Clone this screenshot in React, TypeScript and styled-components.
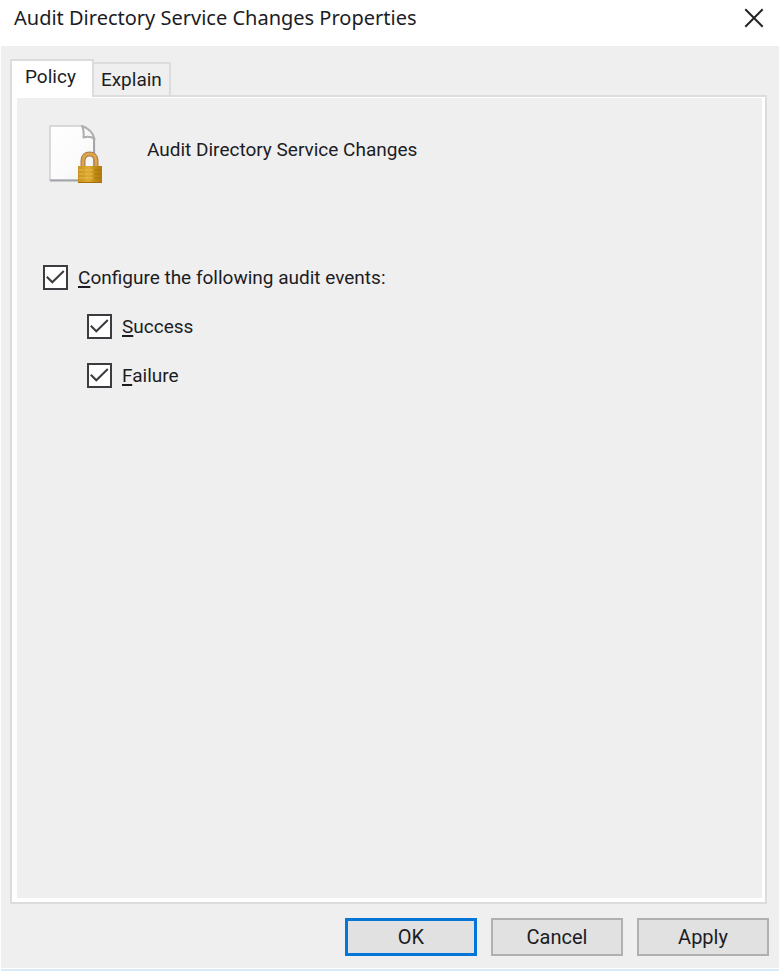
import React, { useId, useState } from "react";
import styled, { createGlobalStyle } from "styled-components";

const GlobalStyle = createGlobalStyle`
  *, *::before, *::after { box-sizing: border-box; }
  body {
    margin: 0;
    background: #ffffff;
    color: #1c1c24;
    font-family: Roboto, "Liberation Sans", Arial, sans-serif;
    font-size: 19px;
    line-height: 24px;
  }
  button, input { font: inherit; color: inherit; }
`;

const Dialog = styled.main`
  display: flex;
  flex-direction: column;
  min-height: 100vh;
  padding: 0 2px 1px 1px;
`;

const TitleBar = styled.header`
  display: flex;
  align-items: center;
  justify-content: space-between;
  height: 46px;
  padding: 0 12px 10px 13px;
`;

const Title = styled.h1`
  margin: 0;
  font-family: "Noto Sans", "Open Sans", sans-serif;
  font-size: 20px;
  font-weight: 400;
  line-height: 28px;
`;

const CloseButton = styled.button`
  display: flex;
  padding: 3px;
  border: 0;
  background: transparent;
`;

const Body = styled.div`
  display: flex;
  flex: 1;
  flex-direction: column;
  padding: 13px 10px 12px 9px;
  background: #efefef;
  border-bottom: 1px solid #ffffff;
  box-shadow: 0 2px 0 #d8eaf7;
  margin-bottom: 2px;
`;

const TabList = styled.div`
  display: flex;
  align-items: flex-end;
`;

const Tab = styled.button<{ $active: boolean }>`
  position: relative;
  z-index: ${(p) => (p.$active ? 1 : 0)};
  height: ${(p) => (p.$active ? 38 : 33)}px;
  margin-bottom: ${(p) => (p.$active ? -2 : 0)}px;
  padding: ${(p) => (p.$active ? "0 16px 4px 13px" : "0 7px")};
  border: 2px solid #dcdcdc;
  border-bottom: 0;
  background: ${(p) => (p.$active ? "#ffffff" : "#efefef")};
  & + & { border-left: 0; }
`;

const Panel = styled.section`
  display: flex;
  flex: 1;
  flex-direction: column;
  margin-right: 2px;
  border: 2px solid #dcdcdc;
  background: #ffffff;
  padding: 1px 3px 4px 5px;
`;

const Page = styled.div`
  flex: 1;
  padding: 26px;
  background: #efefef;
`;

const PolicyHeading = styled.div`
  display: flex;
  align-items: flex-start;
  gap: 45px;
  margin: 0 0 81px 5px;
`;

const PolicyName = styled.h2`
  margin: 0;
  padding-top: 14px;
  font-size: 19px;
  font-weight: 400;
  line-height: 24px;
`;

const Options = styled.div`
  display: flex;
  flex-direction: column;
  gap: 24px;
`;

const Option = styled.label<{ $nested?: boolean }>`
  display: flex;
  align-items: center;
  gap: 10px;
  margin-left: ${(p) => (p.$nested ? 44 : 0)}px;
`;

const BoxFrame = styled.span`
  display: grid;
  width: 25px;
  height: 25px;
  & > * { grid-area: 1 / 1; }
`;

const Box = styled.input`
  appearance: none;
  width: 25px;
  height: 25px;
  margin: 0;
  border: 2px solid #3c3c40;
  background: #ffffff;
  & + svg { visibility: hidden; pointer-events: none; }
  &:checked + svg { visibility: visible; }
`;

const AccessKey = styled.span`
  text-decoration: underline;
  text-decoration-thickness: 2px;
  text-underline-offset: 2px;
  text-decoration-skip-ink: none;
`;

const Actions = styled.footer`
  display: flex;
  justify-content: flex-end;
  gap: 14px;
  padding-top: 14px;
`;

const ActionButton = styled.button<{ $primary?: boolean }>`
  width: 132px;
  height: 38px;
  padding: 0;
  border: ${(p) => (p.$primary ? "3px solid #0675d8" : "2px solid #b0b0b0")};
  background: #e1e1e1;
  font-size: 20px;
`;

function CloseIcon() {
  return (
    <svg width="20" height="20" viewBox="0 0 20 20" aria-hidden="true">
      <path d="M1.3 1.3 18.7 18.7M18.7 1.3 1.3 18.7" fill="none" stroke="#242428" strokeWidth="2" />
    </svg>
  );
}

function CheckMark() {
  return (
    <svg width="25" height="25" viewBox="0 0 25 25" aria-hidden="true">
      <path d="M3.8 11.8 9.300 17.300 20.800 6" fill="none" stroke="#3c3c40" strokeWidth="2" />
    </svg>
  );
}

function LockedDocumentIcon() {
  const id = useId();
  return (
    <svg width="54" height="60" viewBox="0 0 54 60" aria-hidden="true">
      <defs>
        <linearGradient id={`${id}-paper`} x1="0" y1="0" x2="1" y2="1">
          <stop offset="0" stopColor="#ffffff" />
          <stop offset="0.6" stopColor="#fbfbfb" />
          <stop offset="1" stopColor="#eceef0" />
        </linearGradient>
        <linearGradient id={`${id}-brass`}>
          <stop offset="0" stopColor="#c8921c" />
          <stop offset="0.45" stopColor="#dfac35" />
          <stop offset="0.7" stopColor="#c18c14" />
          <stop offset="1" stopColor="#b27b0c" />
        </linearGradient>
      </defs>
      <path d="M2 2H34C40 4 45 9 46.500 15V56H2Z" fill={`url(#${id}-paper)`} stroke="#cfd0d2" strokeWidth="1.5" />
      <path d="M2 56.500H46V15" fill="none" stroke="#a2a5aa" strokeWidth="2" />
      <path d="M34 2C40 4 45 9 46.500 15C43 12.500 39 12.500 35.500 13.500C36 9 35.500 5 34 2Z" fill="#f7f7f7" stroke="#adafb1" strokeWidth="2" strokeLinejoin="round" />
      <path d="M35 44V37C35 32 38 30 41.500 30S48 32 48 37V44" fill="none" stroke="#a97a55" strokeWidth="5" />
      <path d="M35 44V37C35 32 38 30 41.500 30S48 32 48 37V44" fill="none" stroke="#dda546" strokeWidth="2.800" />
      <rect x="30" y="42" width="24" height="17" fill={`url(#${id}-brass)`} />
      <path d="M31 46H45M31 50H45M31 54H45" stroke="#e8bd4c" strokeWidth="1" strokeDasharray="4 1" />
      <path d="M47 46H53M47 50H53M47 54H53" stroke="#a87409" strokeWidth="1" />
      <path d="M30 58.500H54" stroke="#a56e0b" strokeWidth="1" />
    </svg>
  );
}

function AuditOption({ label, nested }: { label: string; nested?: boolean }) {
  return (
    <Option $nested={nested}>
      <BoxFrame>
        <Box type="checkbox" defaultChecked />
        <CheckMark />
      </BoxFrame>
      <span>
        <AccessKey>{label[0]}</AccessKey>
        {label.slice(1)}
      </span>
    </Option>
  );
}

const tabs = ["Policy", "Explain"];

export default function App() {
  const [active, setActive] = useState("Policy");
  return (
    <>
      <GlobalStyle />
      <Dialog>
        <TitleBar>
          <Title>Audit Directory Service Changes Properties</Title>
          <CloseButton type="button" aria-label="Close">
            <CloseIcon />
          </CloseButton>
        </TitleBar>
        <Body>
          <TabList role="tablist">
            {tabs.map((name) => (
              <Tab
                key={name}
                type="button"
                role="tab"
                aria-selected={active === name}
                $active={active === name}
                onClick={() => setActive(name)}
              >
                {name}
              </Tab>
            ))}
          </TabList>
          <Panel role="tabpanel" aria-label={active}>
            <Page>
              <PolicyHeading>
                <LockedDocumentIcon />
                <PolicyName>Audit Directory Service Changes</PolicyName>
              </PolicyHeading>
              {active === "Policy" && (
                <Options>
                  <AuditOption label="Configure the following audit events:" />
                  <AuditOption label="Success" nested />
                  <AuditOption label="Failure" nested />
                </Options>
              )}
            </Page>
          </Panel>
          <Actions>
            <ActionButton type="button" $primary>OK</ActionButton>
            <ActionButton type="button">Cancel</ActionButton>
            <ActionButton type="button">Apply</ActionButton>
          </Actions>
        </Body>
      </Dialog>
    </>
  );
}
